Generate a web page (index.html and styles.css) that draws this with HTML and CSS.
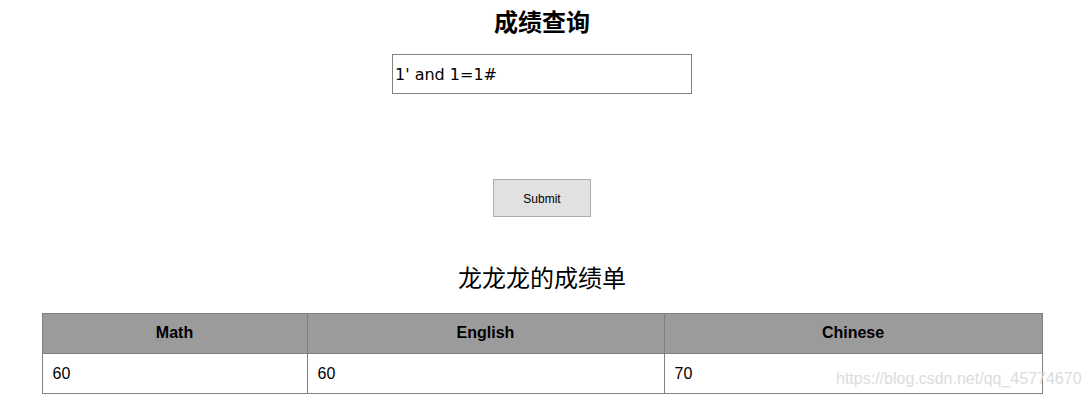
FILE: index.html
```html
<!DOCTYPE html>
<html lang="zh">
<head>
<meta charset="utf-8">
<title>成绩查询</title>
<link rel="stylesheet" href="styles.css">
</head>
<body>
<div class="page">
  <h1 class="title">成绩查询</h1>
  <form class="query">
    <input class="query-input" type="text" value="1' and 1=1#">
    <button class="submit" type="button">Submit</button>
  </form>
  <h2 class="subtitle">龙龙龙的成绩单</h2>
  <table class="scores">
    <colgroup>
      <col class="c1"><col class="c2"><col class="c3">
    </colgroup>
    <thead>
      <tr><th>Math</th><th>English</th><th>Chinese</th></tr>
    </thead>
    <tbody>
      <tr><td>60</td><td>60</td><td>70</td></tr>
    </tbody>
  </table>
</div>
<div class="watermark">https://blog.csdn.net/qq_45774670</div>
</body>
</html>
```
FILE: styles.css
```css
html, body {
  margin: 0;
  padding: 0;
  background: #fff;
}
body {
  font-family: "Liberation Sans", "Noto Sans CJK SC", sans-serif;
  color: #000;
  position: relative;
  height: 398px;
  overflow: hidden;
}
.page {
  width: 1000px;
  margin-left: 42px;
  padding-top: 7px;
  display: flex;
  flex-direction: column;
  align-items: center;
}
.title {
  margin: 0;
  font-family: "Noto Sans CJK SC", sans-serif;
  font-size: 24px;
  font-weight: bold;
  line-height: 28px;
}
.query {
  margin-top: 19px;
  display: flex;
  flex-direction: column;
  align-items: center;
}
.query-input {
  box-sizing: border-box;
  width: 300px;
  height: 40px;
  border: 1px solid #808080;
  padding: 0 2px;
  font-family: "DejaVu Sans", sans-serif;
  font-size: 16px;
  color: #000;
  outline: none;
}
.submit {
  margin-top: 85px;
  box-sizing: border-box;
  width: 98px;
  height: 38px;
  background: #e1e1e1;
  border: 1px solid #adadad;
  font-family: "Liberation Sans", sans-serif;
  font-size: 12px;
  color: #000;
  padding: 2px 0 0;
}
.subtitle {
  margin: 43px 0 0;
  font-family: "Noto Sans CJK SC", sans-serif;
  font-size: 24px;
  font-weight: normal;
  line-height: 34px;
}
.scores {
  margin-top: 19px;
  width: 1000px;
  border-collapse: collapse;
  table-layout: fixed;
  font-size: 16px;
}
.c1 { width: 265px; }
.c2 { width: 357px; }
.c3 { width: 378px; }
.scores th, .scores td {
  border: 1px solid #808080;
  height: 40px;
  padding: 0 10px;
  box-sizing: border-box;
}
.scores th {
  background: #9b9b9b;
  font-weight: bold;
  text-align: center;
  padding-bottom: 2px;
}
.scores td {
  text-align: left;
  padding-top: 1px;
}
.watermark {
  position: absolute;
  left: 836px;
  top: 370px;
  font-family: "Liberation Sans", sans-serif;
  font-size: 16px;
  color: #dcdcdc;
}
```
